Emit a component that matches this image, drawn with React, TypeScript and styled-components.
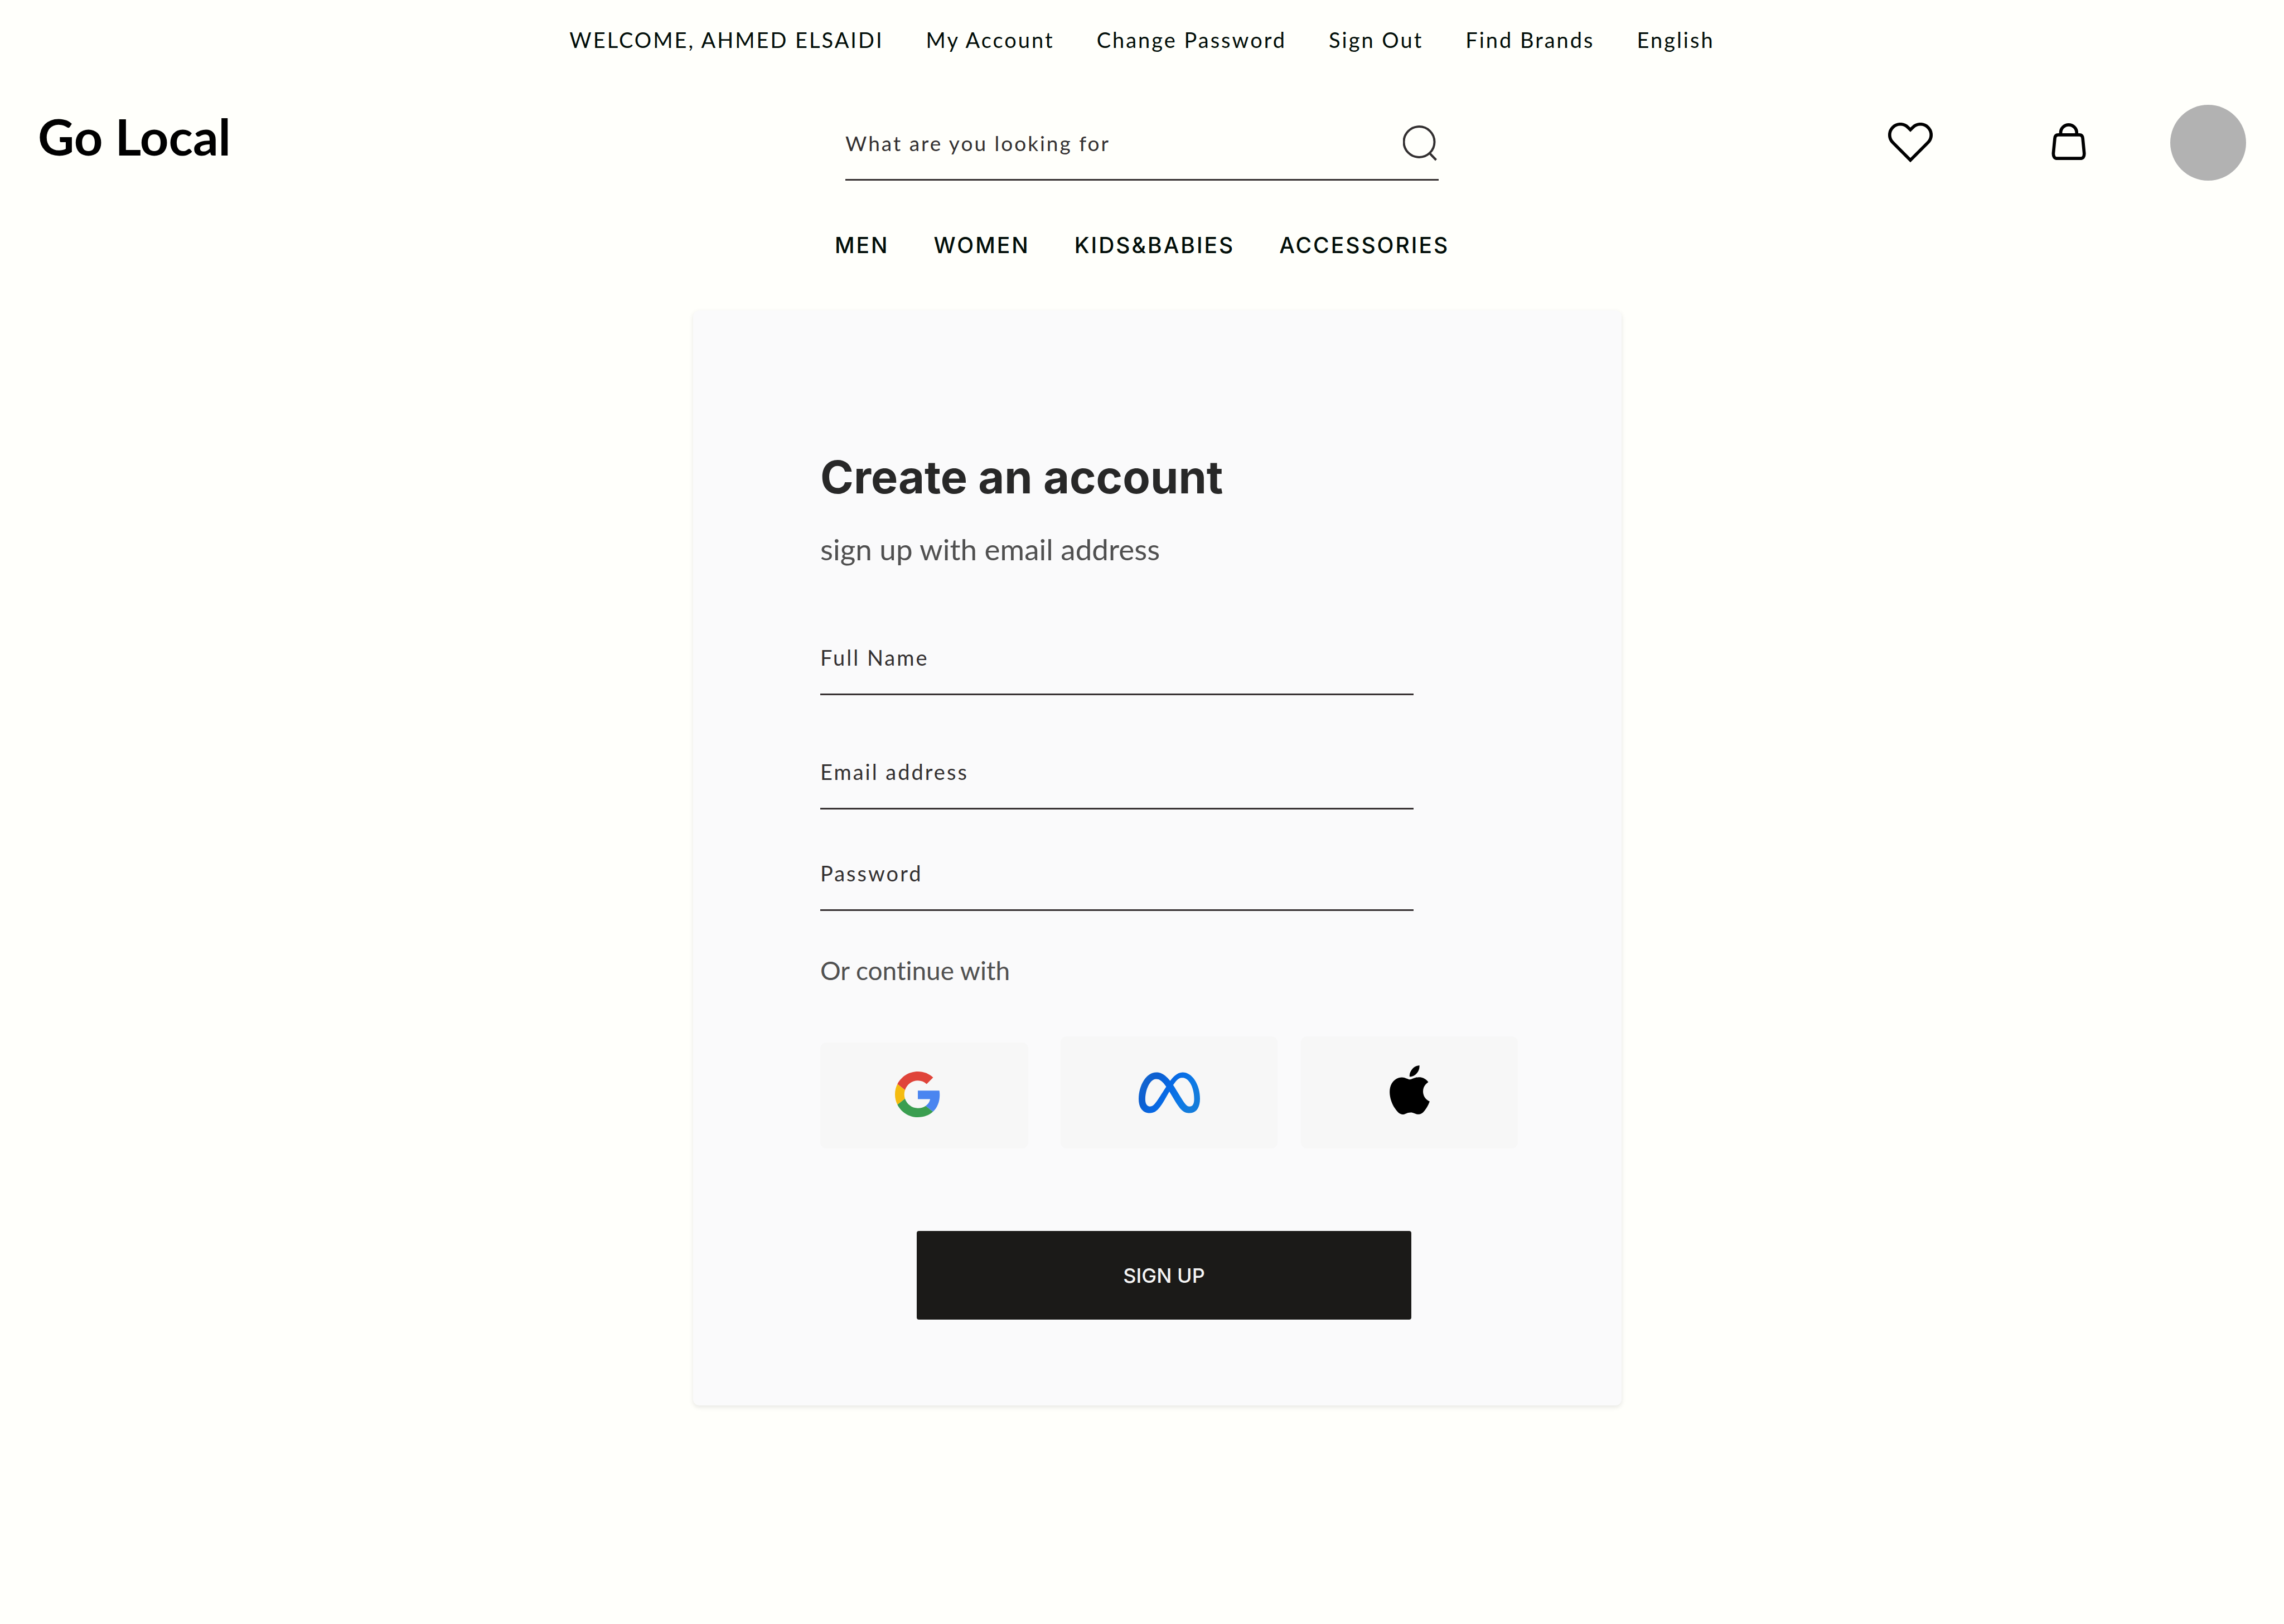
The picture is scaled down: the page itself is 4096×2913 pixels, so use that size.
import React from "react";
import styled, { createGlobalStyle } from "styled-components";
import { SiApple, SiMeta } from "react-icons/si";

const GlobalStyle = createGlobalStyle`
  *, *::before, *::after { box-sizing: border-box; }
  body {
    margin: 0;
    background: #fffffb;
    color: #010d08;
    font-family: Lato, "Liberation Sans", sans-serif;
    font-variant-ligatures: none;
  }
  a { color: inherit; text-decoration: none; }
  h1, p { margin: 0; }
  button, input { font-family: inherit; border: 0; padding: 0; margin: 0; background: none; }
  button { cursor: pointer; }
`;

const Page = styled.div`
  min-height: 100vh;
`;

const AccountNav = styled.nav`
  display: flex;
  justify-content: center;
  gap: 76px;
  padding-top: 48px;
  font-size: 38px;
  line-height: 46px;
  letter-spacing: 3px;
`;

const Header = styled.header`
  display: grid;
  grid-template-columns: 1fr 1064px 1fr;
  margin-top: 94px;
  padding: 0 68px;
`;

const Logo = styled.a`
  justify-self: start;
  color: #000;
  font-size: 90px;
  font-weight: 700;
  line-height: 112px;
`;

const Search = styled.form`
  display: flex;
  align-self: end;
  align-items: center;
  padding-bottom: 32px;
  border-bottom: 3px solid #373132;
`;

const TextInput = styled.input`
  display: block;
  width: 100%;
  outline: none;
  color: #333031;
  font-size: 38px;
  line-height: 46px;
  letter-spacing: 3px;
  &::placeholder { color: #333031; opacity: 1; }
`;

const SearchInput = styled(TextInput)`
  flex: 1;
  font-size: 37px;
`;

const SearchButton = styled.button`
  width: 64px;
  height: 64px;
  color: #333031;
  svg { display: block; }
`;

const Actions = styled.div`
  display: flex;
  justify-content: flex-end;
  gap: 80px;
`;

const IconButton = styled.button`
  display: flex;
  align-items: center;
  justify-content: center;
  width: 204px;
  color: #000;
`;

const Avatar = styled.button`
  width: 136px;
  height: 136px;
  border-radius: 50%;
  background: #b2b2b2;
`;

const MenuNav = styled.nav`
  display: flex;
  justify-content: center;
  gap: 80px;
  margin-top: 92px;
  font-family: Inter, "Liberation Sans", sans-serif;
  font-size: 39px;
  font-weight: 500;
  line-height: 48px;
  letter-spacing: 3px;
`;

const Main = styled.main`
  display: flex;
  justify-content: center;
  padding: 93px 0 93px 55px;
`;

const Card = styled.form`
  display: flex;
  flex-direction: column;
  align-items: flex-start;
  width: 1665px;
  padding: 249px 186px 154px 228px;
  border-radius: 11px;
  background: #fafafb;
  box-shadow: 0 3px 9px rgba(0, 0, 0, 0.1);
`;

const Title = styled.h1`
  color: #282828;
  font-family: Inter, "Liberation Sans", sans-serif;
  font-size: 81px;
  font-weight: 700;
  line-height: 100px;
`;

const Subtitle = styled.p`
  margin-top: 47px;
  color: #505050;
  font-size: 53px;
  line-height: 64px;
`;

const Field = styled(TextInput)<{ $gap: number }>`
  width: 1064px;
  margin-top: ${(p) => p.$gap}px;
  padding-bottom: 42px;
  border-bottom: 3px solid #373132;
`;

const Divider = styled.p`
  margin-top: 79px;
  color: #505050;
  font-size: 46px;
  line-height: 56px;
`;

const Providers = styled.div`
  display: flex;
  align-items: flex-end;
  margin-top: 90px;
`;

const ProviderButton = styled.button<{ $width: number; $height?: number }>`
  display: flex;
  align-items: center;
  justify-content: center;
  width: ${(p) => p.$width}px;
  height: ${(p) => p.$height ?? 201}px;
  border-radius: 11px;
  background: #f7f7f7;
  color: #000;
  & + & { margin-left: 42px; }
`;

const GoogleButton = styled(ProviderButton)`
  margin-right: 16px;
  padding: 0 24px 4px 0;
`;

const AppleButton = styled(ProviderButton)`
  padding-bottom: 10px;
`;

const SubmitButton = styled.button`
  width: 887px;
  height: 159px;
  margin: 148px 0 0 173px;
  border-radius: 4px;
  background: #1b1a18;
  color: #f5f5f5;
  font-family: Inter, "Liberation Sans", sans-serif;
  font-size: 36px;
  font-weight: 500;
`;

const SearchIcon = () => (
  <svg width="64" height="64" viewBox="0 0 64 64" fill="none" stroke="currentColor" strokeWidth="4" aria-hidden="true">
    <circle cx="29" cy="29.5" r="27.5" />
    <path d="M47 49l12.500 13" />
  </svg>
);

const HeartIcon = () => (
  <svg width="80" height="72" viewBox="0 0 80 72" fill="none" stroke="currentColor" strokeWidth="5.7" aria-hidden="true">
    <path d="M40 67.200L8.400 35.600A19.200 19.200 0 0 1 35.600 8.400L40 12.800L44.400 8.400A19.200 19.200 0 0 1 71.600 35.600Z" />
  </svg>
);

const BagIcon = () => (
  <svg width="62" height="70" viewBox="0 0 61 70" fill="none" stroke="currentColor" strokeWidth="5.7" aria-hidden="true">
    <path d="M11.500 20.800H49.700Q55 20.800 55.600 27L58.200 54Q58.600 63.200 51 63.200H10Q2.600 63.200 2.900 54L5.500 27Q6 20.800 11.500 20.800Z" />
    <path d="M16 20.800V17.200A14.300 14.300 0 0 1 44.700 17.200V20.800" />
  </svg>
);

const GoogleLogo = () => (
  <svg width="82" height="82" viewBox="0 0 48 48" aria-hidden="true">
    <path fill="#E0443A" d="M24 9.500c3.540 0 6.710 1.220 9.210 3.600l6.850-6.850C35.900 2.380 30.470 0 24 0 14.620 0 6.510 5.380 2.560 13.220l7.980 6.190C12.430 13.720 17.740 9.500 24 9.500z" />
    <path fill="#4A85F0" d="M46.980 24.550c0-1.570-.15-3.090-.38-4.550H24v9.020h12.940c-.58 2.960-2.260 5.480-4.780 7.180l7.730 6c4.510-4.180 7.090-10.360 7.090-17.650z" />
    <path fill="#F5BC10" d="M10.530 28.590c-.48-1.450-.76-2.990-.76-4.590s.27-3.140.76-4.590l-7.980-6.190C.92 16.460 0 20.120 0 24c0 3.880.92 7.540 2.560 10.780l7.970-6.190z" />
    <path fill="#3A9E50" d="M24 48c6.480 0 11.930-2.130 15.890-5.810l-7.730-6c-2.150 1.450-4.920 2.300-8.160 2.300-6.260 0-11.570-4.220-13.470-9.910l-7.980 6.190C6.510 42.620 14.620 48 24 48z" />
  </svg>
);

const MetaLogo = () => (
  <>
    <svg width="0" height="0" aria-hidden="true">
      <defs>
        <linearGradient id="meta-blue" x1="0" y1="0.100" x2="1" y2="0.500">
          <stop offset="0" stopColor="#1468cf" />
          <stop offset="0.250" stopColor="#0e5fd0" />
          <stop offset="0.500" stopColor="#0768e4" />
          <stop offset="0.800" stopColor="#0d7ae6" />
          <stop offset="1" stopColor="#147cdb" />
        </linearGradient>
      </defs>
    </svg>
    <SiMeta size={110} fill="url(#meta-blue)" aria-hidden="true" />
  </>
);

const accountLinks = ["WELCOME, AHMED ELSAIDI", "My Account", "Change Password", "Sign Out", "Find Brands", "English"];
const categories = ["MEN", "WOMEN", "KIDS&BABIES", "ACCESSORIES"];

export default function App() {
  return (
    <Page>
      <GlobalStyle />
      <AccountNav aria-label="Account">
        {accountLinks.map((label) => (
          <a key={label} href="#">{label}</a>
        ))}
      </AccountNav>
      <Header>
        <Logo href="#">Go Local</Logo>
        <Search role="search">
          <SearchInput type="search" aria-label="Search" placeholder="What are you looking for" />
          <SearchButton type="submit" aria-label="Search"><SearchIcon /></SearchButton>
        </Search>
        <Actions>
          <IconButton aria-label="Favourites"><HeartIcon /></IconButton>
          <IconButton aria-label="Bag"><BagIcon /></IconButton>
          <Avatar aria-label="Profile" />
        </Actions>
      </Header>
      <MenuNav aria-label="Categories">
        {categories.map((label) => (
          <a key={label} href="#">{label}</a>
        ))}
      </MenuNav>
      <Main>
        <Card>
          <Title>Create an account</Title>
          <Subtitle>sign up with email address</Subtitle>
          <Field $gap={139} type="text" aria-label="Full Name" placeholder="Full Name" />
          <Field $gap={114} type="email" aria-label="Email address" placeholder="Email address" />
          <Field $gap={91} type="password" aria-label="Password" placeholder="Password" />
          <Divider>Or continue with</Divider>
          <Providers>
            <GoogleButton type="button" $width={373} $height={190} aria-label="Google"><GoogleLogo /></GoogleButton>
            <ProviderButton type="button" $width={389} aria-label="Meta"><MetaLogo /></ProviderButton>
            <AppleButton type="button" $width={389} aria-label="Apple"><SiApple size={88} aria-hidden="true" /></AppleButton>
          </Providers>
          <SubmitButton type="submit">SIGN UP</SubmitButton>
        </Card>
      </Main>
    </Page>
  );
}
